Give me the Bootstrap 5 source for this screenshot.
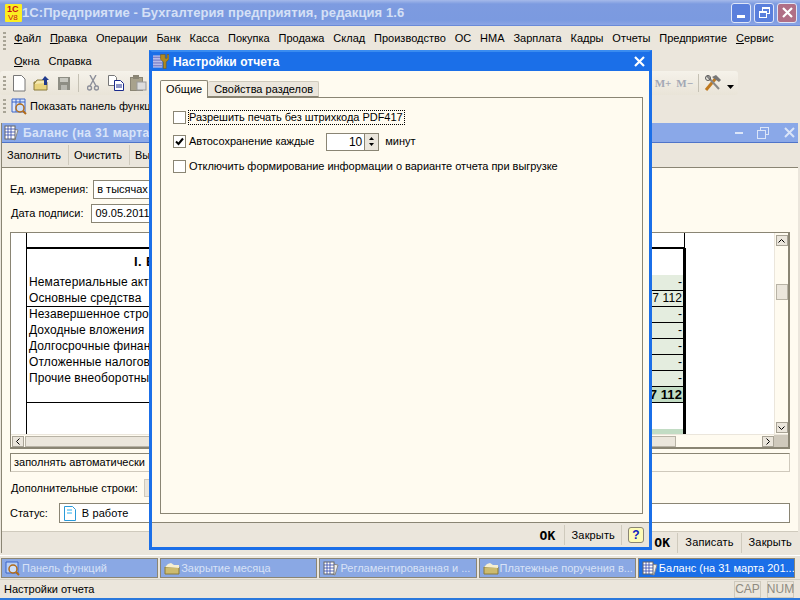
<!DOCTYPE html>
<html lang="ru">
<head>
<meta charset="utf-8">
<title>Настройки отчета</title>
<link href="https://cdn.jsdelivr.net/npm/bootstrap@5.3.0/dist/css/bootstrap.min.css" rel="stylesheet">
<style>
html,body{margin:0;height:100%;overflow:hidden}
body{font:11px/13px "Liberation Sans",Arial,sans-serif;color:#000;background:#ebe6dc}
svg{display:block;flex:none}
.x-app{width:800px;height:600px;position:relative;overflow:hidden;background:#ebe6dc}
.x-app>*{flex:none}
.x-title{height:26px;background:linear-gradient(180deg,#a5b9ea 0,#7d9be0 4px,#7b9ae0 20px,#8fa8e6 26px);padding-left:5px;border-bottom:1px solid #6a8ad8}
.x-title-text{font:bold 13px/1 "Liberation Sans",sans-serif;letter-spacing:.08px;color:#d5e0f6}
.x-winbtn{width:20px;height:20px;border:1px solid #dfe6f8;border-radius:3px;background:#5a7fdc;margin-right:3px}
.x-winbtn-close{background:#b06f86}
.x-menu{height:45px;padding-left:3px}
.x-grip{width:3px;height:15px;background:repeating-linear-gradient(180deg,#a8a496 0 2px,transparent 2px 4px);flex:none}
.x-grip-menu{height:18px;margin-top:6px}
.x-menurow{height:24px;gap:8.9px;padding-left:8px;white-space:nowrap;padding-top:1px}
.x-menurow2{height:21px;gap:9px}
.x-u{text-decoration:underline}
.x-tool{height:24px;width:738px;padding-left:3px;background:linear-gradient(180deg,#f5f2ea,#e9e4d8);border-radius:3px}
.x-tool2{height:23px;padding-left:3px}
.x-grip-t{margin-right:6px}
.x-ml7{margin-left:7px}.x-ml8{margin-left:8px}.x-ml9{margin-left:9px}.x-ml6{margin-left:6px}
.x-sep{width:1px;height:18px;background:#c5c1b4}
.x-mm{font:bold 11px "Liberation Serif",serif;color:#a3a7b4;margin-right:5px}
.x-hammer{margin:0 5px}
.x-arrow{margin-right:4px}
.x-shown{margin-left:3px;white-space:nowrap}
.x-gt2{margin-right:5px}
.x-child{height:430px;margin:5px 2px 0 1px;border-left:1px solid #8a8574;background:#fffbf0}
.x-ctitle{height:20px;flex:none;background:#8aa8e8;border-bottom:1px solid #4f74c9;padding-left:2px;gap:4px}
.x-ctitle-text{font:bold 12px/1 "Liberation Sans",sans-serif;letter-spacing:.35px;color:#d8e3f8}
.x-cw1{margin-right:10px}.x-cw2{margin-right:11px}.x-cw3{margin-right:3px}
.x-ctool{height:25px;flex:none;background:#ebe6dc;border-bottom:1px solid #8a8574}
.x-cbtn{padding:0 7px 0 5px;height:20px;border-right:1px solid #cfcabd;display:flex;align-items:center}
.x-cbody{flex:1;padding:0 8px 0 8px;min-height:0}
.x-frow{height:24px;gap:4px;flex:none}
.x-mt9{margin-top:9px}
.x-lab1{margin-left:0;margin-right:1px}
.x-lab2{margin-left:1px;margin-right:4px}
.x-input{height:19px;border:1px solid #8a8574;background:#fff;padding:0 3px;display:flex;align-items:center;white-space:nowrap}
.x-w120{width:120px}.x-w100{width:100px}
.x-sheetbox{height:217px;width:780px;margin-top:7px;flex:none;border:1px solid #8a8574;border-width:1px 2px 2px 1px;background:#fff;position:relative}
.x-sheet{width:660px;margin-left:15px;height:201px;border-left:1px solid #000;overflow:hidden;flex:none}
.x-top{height:15px;border-bottom:1px solid #000;border-right:1px solid #000;width:658px}
.x-hd{height:27px;border-right:3px solid #000;border-top:1px solid #000;font:bold 13px/26px "Liberation Sans",sans-serif;padding-left:107px;letter-spacing:.4px;white-space:nowrap;overflow:hidden}
.x-r{height:16px;border-right:3px solid #000;font-size:12px;line-height:15px;white-space:nowrap;letter-spacing:.1px}
.x-r-l{flex:1;padding-left:2px}
.x-r-v{width:159px;background:#e4eddf;border-bottom:1px solid #000;text-align:right;padding-right:1px}
.x-line-b{border-bottom:1px solid #000}
.x-r-t{background:#c2dcc4;font-weight:bold;font-size:13px}
.x-blank{height:26px;border-right:3px solid #000}
.x-g{height:6px;border-right:3px solid #000;display:flex}
.x-g-c{width:159px;margin-left:auto;background:#c2dcc4}
.x-vs{width:14px;background:#fffbf0;border-left:1px solid #ebe6dc;position:relative;padding-top:2px;padding-bottom:1px}
.x-sb{width:12px;height:11px;background:#ebe6dc;border:1px solid #a8a396;display:flex;align-items:center;justify-content:center;flex:none}
.x-hs{height:13px;flex:none;background:#fffbf0;border-top:1px solid #ebe6dc;padding-left:1px}
.x-thumb{background:#ebe6dc;border:1px solid #b8b3a6}
.x-thumb-v{width:12px;height:16px;margin-top:38px}
.x-thumb-h{width:651px;height:11px;margin-left:1px}
.x-corner{width:14px;height:12px;background:#cfc9bc;flex:none}
.x-auto{height:19px;width:780px;margin-top:4px;flex:none;border:1px solid #cfc9bc;border-left-color:#8a8574;border-top-color:#8a8574;padding-left:3px;display:flex;align-items:center;white-space:nowrap}
.x-mt4{margin-top:4px}
.x-lab3{margin-left:1px}
.x-addbtn{width:20px;height:18px;background:#ebe6dc;border:1px solid #cfc9bc;margin-left:2px}
.x-frow-s{height:26px}
.x-lab4{margin-right:7px;letter-spacing:0}
.x-inp-s{height:20px;flex:1;gap:6px;padding-left:4px;letter-spacing:.1px}
.x-foot{height:22px;flex:none;background:#ebe6dc;border-top:1px solid #cfcabd;padding-right:6px;margin-top:auto}
.x-tabs{margin-top:2px;padding:2px 5px 0 1px;gap:2px;border-top:1px solid #fff;height:24px}
.x-tab{flex:1;min-width:0;height:20px;border:1px solid #8a8574;background:#8aa8e4;color:#d8e2f6;display:flex;align-items:center;gap:1px;padding-left:3px;white-space:nowrap;font-size:11px;overflow:hidden;letter-spacing:0}
.x-tab-on{background:#1b6fe8;color:#fff}
.x-status{height:19px;padding:1px 6px 0 4px;border-top:1px solid #d5d0c3;gap:6px}
.x-ind{height:17px;width:27px;border:1px solid #cfcabd;color:#8f8b80;display:flex;align-items:center;justify-content:center;font-size:12px}
.x-bottom{height:2px;background:#2a78dc}
.x-dlg{position:absolute;left:149px;top:50px;width:503px;height:500px;border:3px solid #1b6fe8;border-top:2px solid #3a8cf0;background:#fffbf0}
.x-dtitle{height:19px;flex:none;background:#1b6fe8;gap:4px;padding-left:1px}
.x-dtitle-text{font:bold 12px/1 "Liberation Sans",sans-serif;letter-spacing:.05px;color:#fff}
.x-dclose{margin-right:4px}
.x-dbody{padding:9px 6px 0 8px;flex:1;min-height:0}
.x-dtabs{height:17px;position:relative;z-index:1;flex:none}
.x-dt{padding:0 5px;height:18px;border:1px solid #8a8574;border-bottom:0;border-radius:2px 2px 0 0;background:#fffbf0;display:flex;align-items:center}
.x-dt-off{height:16px;margin-top:1px;background:#ebe6dc;border-left:0;border-color:#cfcabd;border-bottom:1px solid #8a8574;padding:0 5px 0 6px}
.x-pane{height:417px;width:483px;flex:none;border:1px solid #8a8574;padding:7px 12px;background:#fffbf0}
.x-line{height:24.5px;gap:3px;white-space:nowrap;letter-spacing:-.03px}
.x-cb{width:13px;height:13px;border:1px solid #8a8574;background:#fff;flex:none;display:flex;align-items:center;justify-content:center}
.x-focus{outline:1px dotted #000;padding:0 1px 0 0}
.x-spin{width:53px;height:18px;border:1px solid #8a8574;background:#fff;margin-left:9px;margin-right:3px}
.x-spinval{flex:1;text-align:right;padding-right:2px;font-size:12px;line-height:17px}
.x-spinbtn{width:14px;background:#ebe6dc;border-left:1px solid #8a8574;gap:3px}
.x-dfoot{height:25px;flex:none;background:#ebe6dc;border-top:1px solid #8a8574;margin:8px -6px 0 -8px;padding-right:5px}
.x-ok{font:bold 13px "DejaVu Sans Mono","Liberation Mono",monospace;letter-spacing:.2px}
.x-help{width:16px;height:16px;background:#fdfbb6;border:1px solid #8a8574;border-radius:3px;color:#1020c0;font-weight:bold;font-size:12px;display:flex;align-items:center;justify-content:center}
.x-divider{width:1px;height:20px;background:#cfcabd}
.x-g6{margin:0 6px}
.x-g7{margin:0 7px}
.x-g8{margin:0 7px 0 8px}
.x-cl{letter-spacing:.15px}
</style>
</head>
<body>
<div class="x-app d-flex flex-column">
  <div class="x-title d-flex align-items-center">
    <svg width="17" height="20" viewBox="0 0 17 20"><rect x="0" y="1" width="17" height="18" fill="#fcee21" rx="1"/><text x="2" y="9" font-size="9" font-weight="bold" fill="#c8101a" font-family="Liberation Sans">1С</text><text x="3" y="17" font-size="8" fill="#c8101a" font-family="Liberation Sans">V8</text></svg>
    <span class="x-title-text flex-grow-1">1С:Предприятие - Бухгалтерия предприятия, редакция 1.6</span>
    <div class="x-winbtn d-flex align-items-end justify-content-center pb-1"><svg width="9" height="3"><rect width="8" height="3" fill="#fff"/></svg></div>
    <div class="x-winbtn d-flex align-items-center justify-content-center"><svg width="13" height="13" viewBox="0 0 13 13" fill="none" stroke="#fff"><rect x="4.5" y="1.5" width="7" height="6"/><path d="M4 2h8" stroke-width="2"/><rect x="1.5" y="5.5" width="7" height="6" fill="#5a7fdc"/><path d="M1 6h8" stroke-width="2"/></svg></div>
    <div class="x-winbtn x-winbtn-close d-flex align-items-center justify-content-center"><svg width="13" height="13" viewBox="0 0 13 13"><path d="M2 2l9 9M11 2l-9 9" stroke="#fff" stroke-width="2.2"/></svg></div>
  </div>

  <div class="x-menu d-flex">
    <div class="x-grip x-grip-menu"></div>
    <div class="flex-grow-1">
      <div class="x-menurow d-flex align-items-center"><span><span class="x-u">Ф</span>айл</span><span><span class="x-u">П</span>равка</span><span>Операции</span><span>Банк</span><span>Касса</span><span>Покупка</span><span>Продажа</span><span>Склад</span><span>Производство</span><span>ОС</span><span>НМА</span><span>Зарплата</span><span>Кадры</span><span>Отчеты</span><span>Предприятие</span><span><span class="x-u">С</span>ервис</span></div>
      <div class="x-menurow x-menurow2 d-flex align-items-center"><span><span class="x-u">О</span>кна</span><span>Справка</span></div>
    </div>
  </div>

  <div class="x-tool d-flex align-items-center">
    <div class="x-grip x-grip-t"></div>
    <svg width="14" height="17" viewBox="0 0 14 17"><path d="M1.5.5h8l3.500 3.500v12h-11.500z" fill="#fff" stroke="#777"/></svg>
    <svg class="x-ml7" width="18" height="16" viewBox="0 0 18 16"><path d="M1 7h13v8H1z" fill="#e8d37c" stroke="#8a7a3a"/><path d="M1 9l3-4h9v3" fill="#f5e9b0" stroke="#8a7a3a"/><path d="M12 1l-3 4h2v5h3V5h2z" fill="#203a8c"/></svg>
    <svg class="x-ml7" width="12" height="13" viewBox="0 0 12 13"><rect width="12" height="13" fill="#8e8e84"/><rect x="2" y="1" width="8" height="4" fill="#c8c8c0"/><rect x="3" y="8" width="6" height="5" fill="#b8b8b0"/></svg>
    <div class="x-sep x-ml8"></div>
    <svg class="x-ml8" width="12" height="16" viewBox="0 0 12 16" fill="none" stroke="#8c8f9a" stroke-width="1.400"><path d="M3 0l6 11M9 0L3 11"/><circle cx="2.500" cy="13" r="2"/><circle cx="9.500" cy="13" r="2"/></svg>
    <svg class="x-ml9" width="16" height="16" viewBox="0 0 16 16"><path d="M.5.500h6l2 2v8h-8z" fill="#fff" stroke="#777"/><path d="M6.500 5.500h6l3 3v7h-9z" fill="#fff" stroke="#1a2a8c"/><path d="M8 10h6M8 12h6" stroke="#1a2a8c"/></svg>
    <svg class="x-ml6" width="17" height="16" viewBox="0 0 17 16"><rect x=".5" y="2.500" width="12" height="13" fill="#a8a28c" stroke="#8a8574"/><rect x="3" y="0" width="6" height="4" fill="#8a8574"/><rect x="7" y="7" width="9" height="8" fill="#dcdcdc" stroke="#999"/></svg>
    <div class="flex-grow-1"></div>
    <span class="x-mm">M+</span><span class="x-mm">M−</span>
    <div class="x-sep"></div>
    <svg class="x-hammer" width="18" height="18" viewBox="0 0 18 18"><path d="M2 16L12 4" stroke="#c07a20" stroke-width="3"/><path d="M8 3l4-2 5 5-2 2-3-2z" fill="#777"/><path d="M3 2l12 13" stroke="#888" stroke-width="2"/><circle cx="4" cy="4" r="2.500" fill="none" stroke="#555"/></svg>
    <svg class="x-arrow" width="7" height="12" viewBox="0 0 7 12"><path d="M0 8h7l-3.500 4z"/></svg>
  </div>

  <div class="x-tool2 d-flex align-items-center">
    <div class="x-grip x-gt2"></div>
    <svg width="16" height="17" viewBox="0 0 16 17"><path d="M1 1h13v13H1z" fill="#dfe8fa" stroke="#3a64c8"/><path d="M1 4h13M5 1v13M9 1v13" stroke="#3a64c8"/><circle cx="9" cy="10" r="4" fill="#cfe0f8" stroke="#b06a1a" stroke-width="1.500"/><path d="M12 13l3 3" stroke="#b06a1a" stroke-width="2"/></svg>
    <span class="x-shown">Показать панель функций</span>
  </div>

  <div class="x-child d-flex flex-column">
    <div class="x-ctitle d-flex align-items-center">
      <svg width="15" height="16" viewBox="0 0 15 16"><path d="M4 3l10 2-3 10-9-3z" fill="#eee" stroke="#888"/><rect x="1" y="1" width="10" height="13" fill="#fff" stroke="#666"/><path d="M1 4h10M1 7h10M1 10h10M4 1v13M7 1v13" stroke="#3048a8" stroke-width=".8"/></svg>
      <span class="x-ctitle-text flex-grow-1">Баланс (на 31 марта 2011 г.)</span>
      <svg class="x-cw1" width="8" height="3"><rect width="8" height="2" y="1" fill="#dbe5f8"/></svg>
      <svg class="x-cw2" width="12" height="12" viewBox="0 0 12 12" fill="none" stroke="#dbe5f8"><rect x="3.500" y=".5" width="8" height="7"/><rect x=".5" y="3.500" width="8" height="8" fill="#8aa8e8"/></svg>
      <svg class="x-cw3" width="11" height="11" viewBox="0 0 11 11"><path d="M1 1l9 9M10 1l-9 9" stroke="#dbe5f8" stroke-width="2"/></svg>
    </div>
    <div class="x-ctool d-flex align-items-center"><div class="x-cbtn">Заполнить</div><div class="x-cbtn">Очистить</div><div class="x-cbtn">Выгрузка</div></div>
    <div class="x-cbody d-flex flex-column">
      <div class="x-frow x-mt9 d-flex align-items-center"><span class="x-lab1">Ед. измерения:</span><div class="x-input x-w120">в тысячах рублей</div></div>
      <div class="x-frow d-flex align-items-center"><span class="x-lab2">Дата подписи:</span><div class="x-input x-w100">09.05.2011</div></div>
      <div class="x-sheetbox d-flex flex-column">
        <div class="d-flex flex-grow-1 overflow-hidden">
          <div class="x-sheet">
            <div class="x-top"></div>
            <div class="x-hd">I. ВНЕОБОРОТНЫЕ АКТИВЫ</div>
            <div class="x-r d-flex"><span class="x-r-l">Нематериальные активы</span><span class="x-r-v">-</span></div>
            <div class="x-r d-flex"><span class="x-r-l x-line-b">Основные средства</span><span class="x-r-v">7 112</span></div>
            <div class="x-r d-flex"><span class="x-r-l">Незавершенное строительство</span><span class="x-r-v">-</span></div>
            <div class="x-r d-flex"><span class="x-r-l">Доходные вложения</span><span class="x-r-v">-</span></div>
            <div class="x-r d-flex"><span class="x-r-l">Долгосрочные финансовые</span><span class="x-r-v">-</span></div>
            <div class="x-r d-flex"><span class="x-r-l">Отложенные налоговые</span><span class="x-r-v">-</span></div>
            <div class="x-r d-flex"><span class="x-r-l">Прочие внеоборотные</span><span class="x-r-v">-</span></div>
            <div class="x-r d-flex"><span class="x-r-l x-line-b"></span><span class="x-r-v x-r-t">7 112</span></div>
            <div class="x-blank"></div>
            <div class="x-g"><div class="x-g-c"></div></div>
          </div>
          <div class="flex-grow-1"></div>
          <div class="x-vs d-flex flex-column align-items-center">
            <div class="x-sb"><svg width="7" height="4" viewBox="0 0 7 4" fill="none" stroke="#000"><path d="M.5 3.500l3-3 3 3"/></svg></div>
            <div class="x-thumb x-thumb-v"></div>
            <div class="flex-grow-1"></div>
            <div class="x-sb"><svg width="7" height="4" viewBox="0 0 7 4" fill="none" stroke="#000"><path d="M.5.500l3 3 3-3"/></svg></div>
          </div>
        </div>
        <div class="x-hs d-flex align-items-center">
          <div class="x-sb"><svg width="4" height="7" viewBox="0 0 4 7" fill="none" stroke="#000"><path d="M3.500.5l-3 3 3 3"/></svg></div>
          <div class="x-thumb x-thumb-h"></div>
          <div class="flex-grow-1"></div>
          <div class="x-sb"><svg width="4" height="7" viewBox="0 0 4 7" fill="none" stroke="#000"><path d="M.5.500l3 3-3 3"/></svg></div>
          <div class="x-corner"></div>
        </div>
      </div>
      <div class="x-auto">заполнять автоматически</div>
      <div class="x-frow x-mt4 d-flex align-items-center"><span class="x-lab3">Дополнительные строки:</span><div class="x-addbtn"></div></div>
      <div class="x-frow x-frow-s d-flex align-items-center"><span class="x-lab4">Статус:</span><div class="x-input x-inp-s"><svg width="12" height="15" viewBox="0 0 12 15"><path d="M.5.500h8l3 3v11H.500z" fill="#fff" stroke="#2a9ad8"/><path d="M3 4h5M3 7h5" stroke="#2ab0f0"/></svg>В работе</div></div>
    </div>
    <div class="x-foot d-flex align-items-center justify-content-end"><span class="x-ok">ОК</span><div class="x-divider x-g7"></div><span class="x-cl">Записать</span><div class="x-divider x-g7"></div><span class="x-cl">Закрыть</span></div>
  </div>

  <div class="x-tabs d-flex">
    <div class="x-tab"><svg width="16" height="15" viewBox="0 0 16 15"><path d="M1 1h12v11H1z" fill="#b8cff5" stroke="#3a64c8"/><circle cx="8" cy="8" r="4" fill="#cfe0f8" stroke="#b06a1a" stroke-width="1.500"/><path d="M11 11l3 3" stroke="#b06a1a" stroke-width="2"/></svg><span>Панель функций</span></div>
    <div class="x-tab"><svg width="16" height="13" viewBox="0 0 16 13"><path d="M1 5h14v7H1z" fill="#cdbb6e" stroke="#8a7a3a"/><path d="M1 5l3-3 3-1 3 2h5v3" fill="#f6efd2"/></svg><span>Закрытие месяца</span></div>
    <div class="x-tab"><svg width="16" height="15" viewBox="0 0 16 15"><path d="M5 2l10 2-3 10-9-3z" fill="#eee" stroke="#888"/><rect x="1" y="1" width="10" height="12" fill="#fff" stroke="#666"/><path d="M1 4h10M1 7h10M1 10h10M4 1v12M7 1v12" stroke="#3048a8" stroke-width=".8"/></svg><span>Регламентированная и ...</span></div>
    <div class="x-tab"><svg width="16" height="13" viewBox="0 0 16 13"><path d="M1 5h14v7H1z" fill="#cdbb6e" stroke="#8a7a3a"/><path d="M1 5l3-3 3-1 3 2h5v3" fill="#f6efd2"/></svg><span>Платежные поручения в...</span></div>
    <div class="x-tab x-tab-on"><svg width="16" height="15" viewBox="0 0 16 15"><path d="M5 2l10 2-3 10-9-3z" fill="#eee" stroke="#888"/><rect x="1" y="1" width="10" height="12" fill="#fff" stroke="#666"/><path d="M1 4h10M1 7h10M1 10h10M4 1v12M7 1v12" stroke="#3048a8" stroke-width=".8"/></svg><span>Баланс (на 31 марта 201...</span></div>
  </div>
  <div class="x-status d-flex align-items-center"><span class="flex-grow-1">Настройки отчета</span><div class="x-ind">CAP</div><div class="x-ind">NUM</div></div>
  <div class="x-bottom"></div>

  <div class="x-dlg d-flex flex-column">
    <div class="x-dtitle d-flex align-items-center">
      <svg width="16" height="16" viewBox="0 0 17 16"><rect x="0" y="1" width="10" height="13" fill="#b8bce8"/><path d="M0 3h10M0 6h10M0 9h10M0 12h10" stroke="#6a6ec0"/><path d="M8 0v5l3 3v7h3V8l3-3V0h-2v4h-2V0z" fill="#b08a20" stroke="#6a5010" stroke-width=".5"/></svg>
      <span class="x-dtitle-text flex-grow-1">Настройки отчета</span>
      <svg class="x-dclose" width="11" height="11" viewBox="0 0 11 11"><path d="M1 1l9 9M10 1l-9 9" stroke="#fff" stroke-width="2.200"/></svg>
    </div>
    <div class="x-dbody d-flex flex-column">
      <div class="x-dtabs d-flex"><div class="x-dt">Общие</div><div class="x-dt x-dt-off">Свойства разделов</div></div>
      <div class="x-pane">
        <div class="x-line d-flex align-items-center"><div class="x-cb"></div><span class="x-focus">Разрешить печать без штрихкода PDF417</span></div>
        <div class="x-line d-flex align-items-center"><div class="x-cb"><svg width="9" height="9" viewBox="0 0 9 9" fill="none" stroke="#000" stroke-width="2"><path d="M1 4.500l2.500 2.500L8 1.500"/></svg></div><span>Автосохранение каждые</span><div class="x-spin d-flex"><div class="x-spinval">10</div><div class="x-spinbtn d-flex flex-column align-items-center justify-content-center"><svg width="5" height="3" viewBox="0 0 5 3"><path d="M2.500 0l2.500 3H0z"/></svg><svg width="5" height="3" viewBox="0 0 5 3"><path d="M0 0h5L2.500 3z"/></svg></div></div><span>минут</span></div>
        <div class="x-line d-flex align-items-center"><div class="x-cb"></div><span>Отключить формирование информации о варианте отчета при выгрузке</span></div>
      </div>
      <div class="x-dfoot d-flex align-items-center justify-content-end"><span class="x-ok">ОК</span><div class="x-divider x-g8"></div><span class="x-cl">Закрыть</span><div class="x-divider x-g6"></div><div class="x-help">?</div></div>
    </div>
  </div>
</div>
</body>
</html>
